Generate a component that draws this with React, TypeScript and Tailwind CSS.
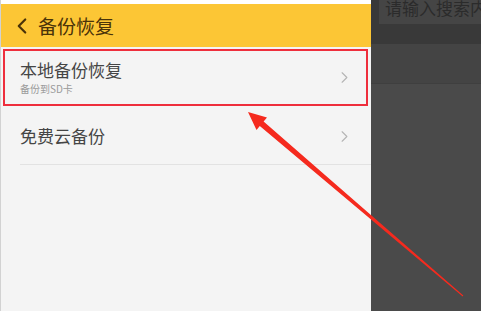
import { ChevronLeft, ChevronRight } from 'lucide-react';

const font = { fontFamily: '"Noto Sans CJK SC", "Noto Sans", sans-serif' };

const App = () => {
    return (
        <div className="relative w-[481px] h-[311px] overflow-hidden flex bg-white" style={font}>
            {/* left: settings page */}
            <div className="w-[371px] shrink-0 h-full flex flex-col pt-[4px] bg-white border-l border-[#d2d2d2]">
                <div className="h-[43px] bg-[#fcc635] flex items-center pl-[8px] gap-[3px]">
                    <ChevronLeft size={26} strokeWidth={2} className="text-[#4a3309]" />
                    <span className="text-[19px] leading-none text-[#4a3309]">备份恢复</span>
                </div>

                <div className="flex-1 bg-[#f4f4f4]">
                    <div className="h-[61px] flex items-center pl-[19px] pr-[17px]">
                        <div className="flex-1 flex flex-col">
                            <span className="text-[17px] leading-[20px] text-[#454545]">本地备份恢复</span>
                            <span className="text-[10px] leading-[12px] mt-[3px] text-[#9a9a9a]">备份到SD卡</span>
                        </div>
                        <ChevronRight size={19} strokeWidth={1.4} className="text-[#b4b4b4]" />
                    </div>

                    <div className="ml-[19px] h-[57px] flex items-center pr-[17px] border-b border-[#e2e2e2]">
                        <span className="flex-1 text-[17px] leading-[20px] text-[#454545]">免费云备份</span>
                        <ChevronRight size={19} strokeWidth={1.4} className="text-[#b4b4b4]" />
                    </div>
                </div>
            </div>

            {/* right: dimmed screen behind */}
            <div className="flex-1 min-w-0 h-full flex flex-col bg-[#4a4a4a]">
                <div className="h-[44px] bg-[#393939] pl-[8px]">
                    <div className="h-[24px] bg-[#454545] overflow-hidden pl-[6px]">
                        <span className="block -mt-[5px] text-[17px] whitespace-nowrap text-[#2b2b2b]">请输入搜索内容</span>
                    </div>
                </div>
                <div className="h-[40px] bg-[#444444] border-b border-[#3f3f3f]" />
            </div>

            {/* annotation: red box and arrow */}
            <svg className="absolute inset-0 pointer-events-none" width="481" height="311" viewBox="0 0 481 311">
                <rect x="4" y="50" width="363" height="55" fill="none" stroke="#ee2e3c" strokeWidth="2" />
                <polygon
                    fill="#f52a1e"
                    points="248,112 267,117.5 263.6,121.4 463.3,295.6 462.7,296.4 259.8,126 256.5,130"
                />
            </svg>
        </div>
    );
};

export default App;
